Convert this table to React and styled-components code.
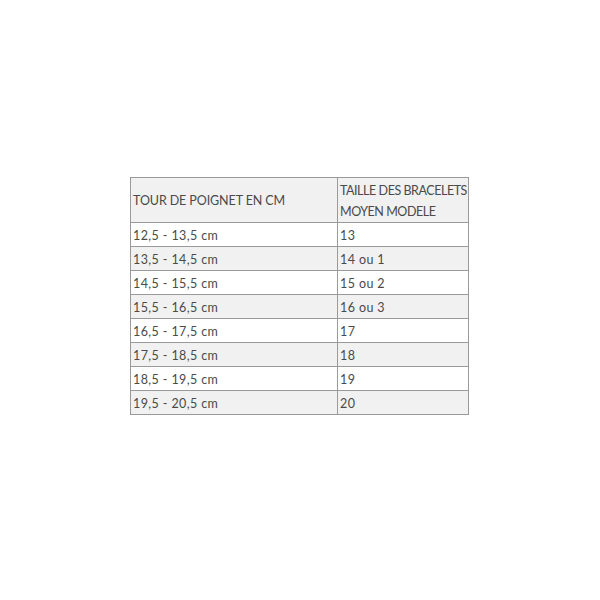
import styled, { createGlobalStyle } from "styled-components";

const GlobalStyle = createGlobalStyle`
  html, body {
    margin: 0;
    padding: 0;
    background: #ffffff;
  }
`;

const Page = styled.div`
  width: 600px;
  height: 600px;
  box-sizing: border-box;
  padding: 177px 0 0 130px;
  font-family: "Lato", "Liberation Sans", sans-serif;
`;

const Table = styled.table`
  border-collapse: collapse;
  table-layout: fixed;
  width: 339px;
  color: #4a4a4a;
  font-size: 12.5px;
`;

const Row = styled.tr`
  background: ${(p) => (p.$shaded ? "#f1f1f1" : "#ffffff")};
  height: ${(p) => (p.$head ? "45px" : "24px")};
`;

const Cell = styled.td`
  border: 1px solid #9a9a9a;
  padding: ${(p) => (p.$head ? "1px 0 0 2px" : "2px 0 0 2px")};
  vertical-align: middle;
  line-height: ${(p) => (p.$head ? "21px" : "20px")};
  white-space: nowrap;
  overflow: hidden;
  width: ${(p) => p.$w || "auto"};
  letter-spacing: ${(p) => (p.$num ? "0.4px" : p.$tight ? "-0.45px" : "-0.1px")};
`;

const sizes = [
  ["12,5 - 13,5 cm", "13"],
  ["13,5 - 14,5 cm", "14 ou 1"],
  ["14,5 - 15,5 cm", "15 ou 2"],
  ["15,5 - 16,5 cm", "16 ou 3"],
  ["16,5 - 17,5 cm", "17"],
  ["17,5 - 18,5 cm", "18"],
  ["18,5 - 19,5 cm", "19"],
  ["19,5 - 20,5 cm", "20"],
];

export default function App() {
  return (
    <>
      <GlobalStyle />
      <Page>
        <Table>
          <tbody>
            <Row $head $shaded>
              <Cell $head $w="204px">TOUR DE POIGNET EN CM</Cell>
              <Cell $head $tight>
                TAILLE DES BRACELETS
                <br />
                MOYEN MODELE
              </Cell>
            </Row>
            {sizes.map(([tour, taille], i) => (
              <Row key={tour} $shaded={i % 2 === 1}>
                <Cell $num>{tour}</Cell>
                <Cell $num>{taille}</Cell>
              </Row>
            ))}
          </tbody>
        </Table>
      </Page>
    </>
  );
}
